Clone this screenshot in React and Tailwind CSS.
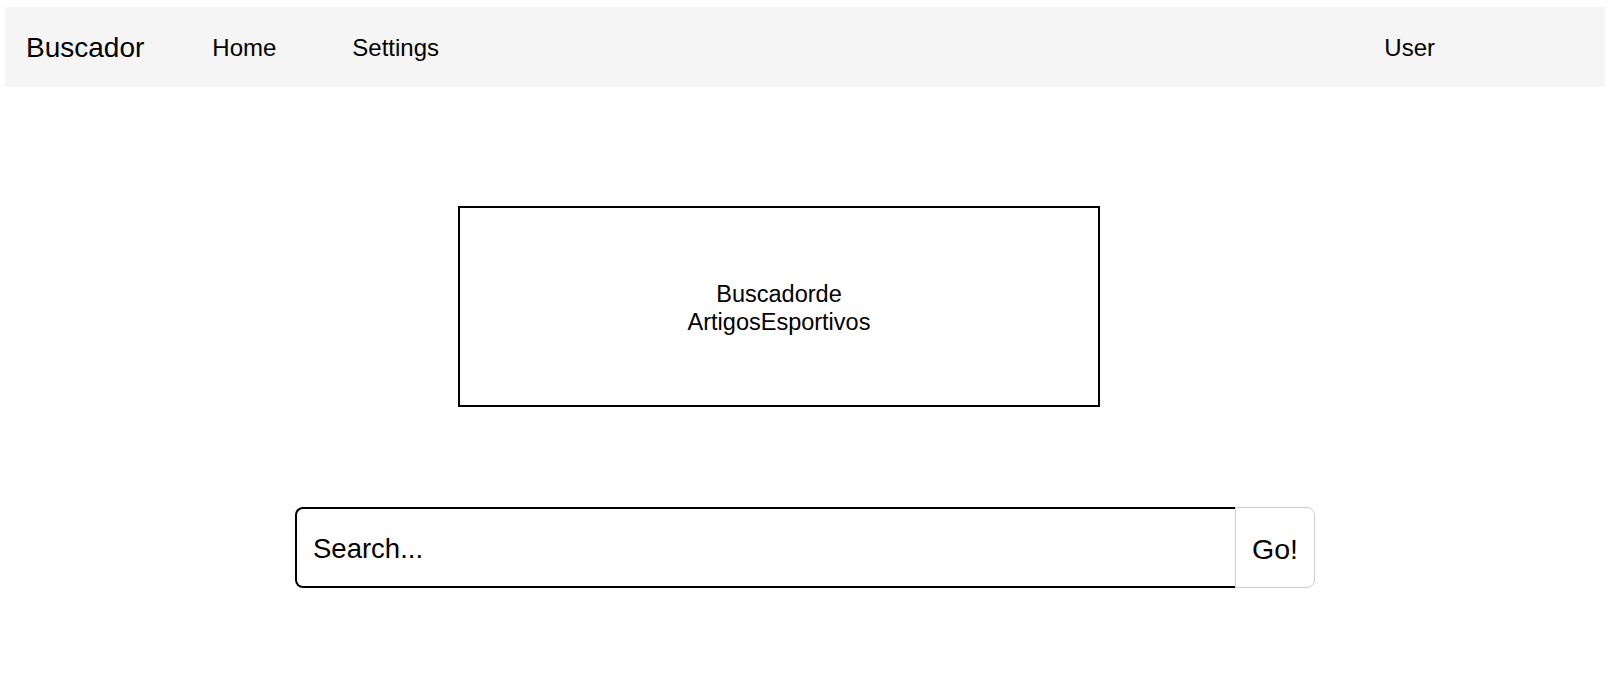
export default function App() {
  return (
    <div
      className="min-h-[694px] bg-white text-black pt-[7px] pl-[5px]"
      style={{ fontFamily: '"Liberation Sans", Arial, Helvetica, sans-serif' }}
    >
      <div className="w-[1600px]">
        <nav className="h-[80px] bg-[#f5f5f5] flex items-center pl-[21px] pt-[2px]">
          <span className="text-[28px] leading-none">Buscador</span>
          <a className="ml-[68px] text-[24px] leading-none">Home</a>
          <a className="ml-[76px] text-[24px] leading-none">Settings</a>
          <a className="ml-auto mr-[170px] text-[24px] leading-none">User</a>
        </nav>

        <div className="mt-[119px] ml-[453px] w-[642px] h-[201px] border-2 border-black flex items-center justify-center">
          <p className="text-[23.5px] leading-[28px] text-center w-[220px] pt-[2px]">
            Buscadorde
            <br />
            ArtigosEsportivos
          </p>
        </div>

        <div className="mt-[100px] mx-auto w-[1020px] h-[81px] flex">
          <div className="flex-1 border-2 border-r-0 border-black rounded-l-[8px] flex items-center pl-[16px] pt-[3px]">
            <span className="text-[27.5px] leading-none">Search...</span>
          </div>
          <button className="w-[80px] h-full border border-[#cfcfcf] rounded-r-[8px] bg-white flex items-center justify-center pt-[3px] text-[28.5px] leading-none">
            Go!
          </button>
        </div>
      </div>
    </div>
  );
}
